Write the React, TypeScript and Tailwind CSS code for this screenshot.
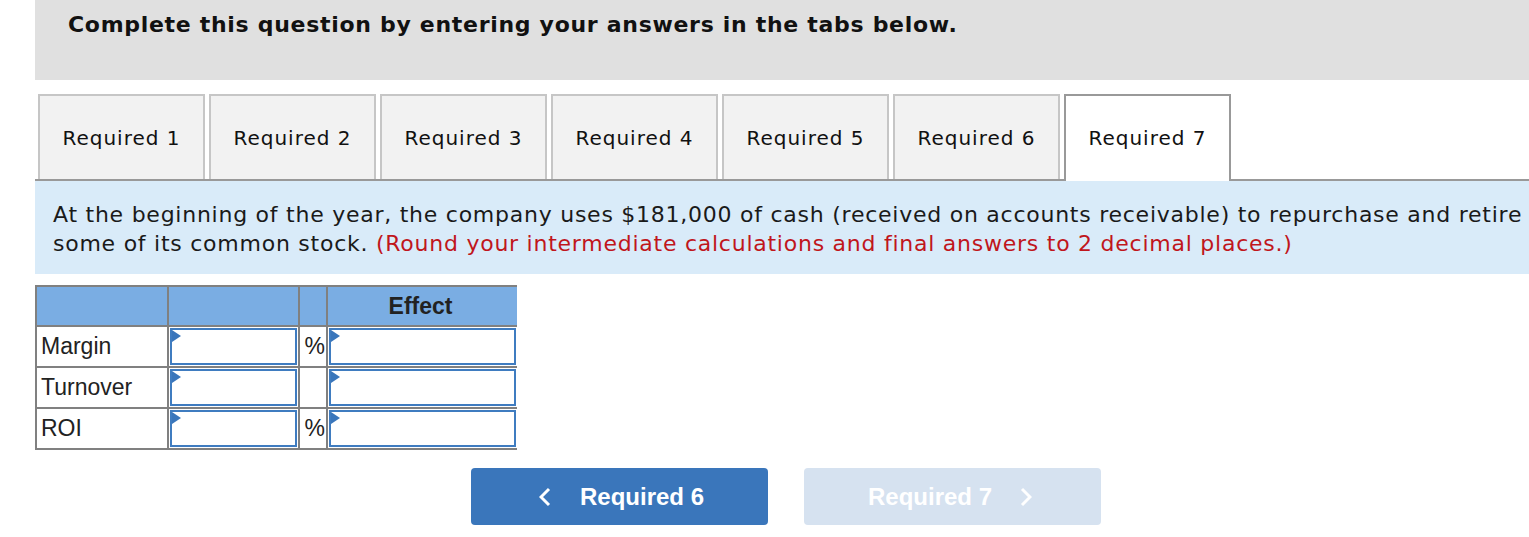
import React from "react";

const verdana = { fontFamily: '"DejaVu Sans", Verdana, sans-serif' };
const arial = { fontFamily: '"Liberation Sans", Arial, sans-serif' };

function Tri() {
  return (
    <svg className="absolute left-0 top-0" width="9" height="12" viewBox="0 0 9 12">
      <polygon points="0,0 9,6 0,12" fill="#3a76bb" />
    </svg>
  );
}

function InputCell() {
  return (
    <div className="bg-white p-[1px]">
      <div className="relative h-full w-full border-2 border-[#3f7cc0] bg-white">
        <Tri />
      </div>
    </div>
  );
}

function Label({ children }: { children: React.ReactNode }) {
  return (
    <div className="flex items-center bg-white pl-[4px] text-[23px] text-[#222]" style={arial}>
      {children}
    </div>
  );
}

function Pct({ show }: { show: boolean }) {
  return (
    <div className="flex items-center justify-end bg-white pr-[1px] text-[23px] text-[#222]" style={arial}>
      {show ? "%" : ""}
    </div>
  );
}

export default function App() {
  const tabs = [1, 2, 3, 4, 5, 6, 7];
  return (
    <div className="w-[1529px] bg-white pb-[12px]">
      <div className="ml-[35px] h-[80px] bg-[#e0e0e0] pl-[33px] pt-[12px]">
        <div className="text-[22px] font-bold leading-[26px] tracking-[0.7px] text-[#111]" style={verdana}>
          Complete this question by entering your answers in the tabs below.
        </div>
      </div>

      <div className="ml-[35px] mt-[14px] flex gap-[4px] border-b-2 border-[#999] pl-[3px]">
        {tabs.map((t) =>
          t === 7 ? (
            <div
              key={t}
              className="-mb-[2px] flex h-[87px] w-[167px] items-center justify-center border-2 border-b-0 border-[#999] bg-white pb-[2px] text-[20px] tracking-[1px] text-[#111]"
              style={verdana}
            >
              Required {t}
            </div>
          ) : (
            <div
              key={t}
              className="flex h-[85px] w-[167px] items-center justify-center border-2 border-b-0 border-[#c6c6c6] bg-[#f2f2f2] text-[20px] tracking-[1px] text-[#111]"
              style={verdana}
            >
              Required {t}
            </div>
          )
        )}
      </div>

      <div className="ml-[35px] h-[93px] overflow-hidden bg-[#d9ebf9] pl-[18px] pt-[19px]">
        <p className="whitespace-nowrap text-[22px] leading-[29px] tracking-[0.75px] text-[#1a1a1a]" style={verdana}>
          At the beginning of the year, the company uses $181,000 of cash (received on accounts receivable) to repurchase and retire
          <br />
          some of its common stock.{" "}
          <span className="text-[#c0161c]">(Round your intermediate calculations and final answers to 2 decimal places.)</span>
        </p>
      </div>

      <div className="ml-[35px] mt-[11px] grid w-[482px] grid-cols-[130px_129px_26px_189px] grid-rows-[38px_39px_39px_39px] gap-[2px] bg-[#808080] p-[2px]">
        <div className="bg-[#7aade3]" />
        <div className="bg-[#7aade3]" />
        <div className="bg-[#7aade3]" />
        <div className="flex items-center justify-center bg-[#7aade3] pr-[4px] text-[23px] font-bold text-[#222]" style={arial}>
          Effect
        </div>

        <Label>Margin</Label>
        <InputCell />
        <Pct show />
        <InputCell />

        <Label>Turnover</Label>
        <InputCell />
        <Pct show={false} />
        <InputCell />

        <Label>ROI</Label>
        <InputCell />
        <Pct show />
        <InputCell />
      </div>

      <div className="ml-[471px] mt-[18px] flex gap-[36px]">
        <div className="flex h-[57px] w-[297px] items-center rounded-[4px] bg-[#3a76bb] text-white">
          <svg className="ml-[68px]" width="12" height="20" viewBox="0 0 12 20">
            <polyline points="10,2 2,10 10,18" fill="none" stroke="white" strokeWidth="3" />
          </svg>
          <span className="ml-[29px] text-[24px] font-bold" style={arial}>
            Required 6
          </span>
        </div>
        <div className="flex h-[57px] w-[297px] items-center rounded-[4px] bg-[#d6e2f0] text-white">
          <span className="ml-[64px] text-[24px] font-bold" style={arial}>
            Required 7
          </span>
          <svg className="ml-[28px]" width="12" height="20" viewBox="0 0 12 20">
            <polyline points="2,2 10,10 2,18" fill="none" stroke="white" strokeWidth="3" />
          </svg>
        </div>
      </div>
    </div>
  );
}
